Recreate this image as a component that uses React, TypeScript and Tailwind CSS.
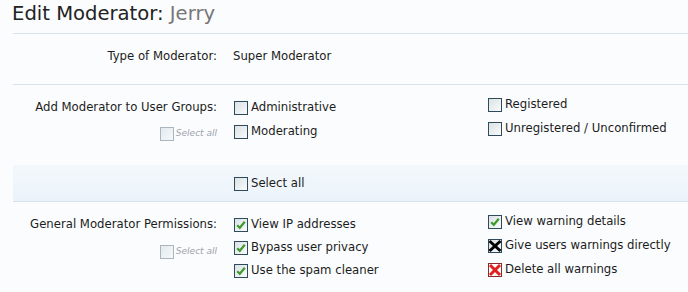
import React from "react";

type Mark = "none" | "check" | "black" | "red";

function Box({ mark = "none", faded = false }: { mark?: Mark; faded?: boolean }) {
  const border = faded ? "#a9b6c0" : "#2d4b5a";
  return (
    <svg width="14" height="14" viewBox="0 0 14 14" className="shrink-0">
      <defs>
        <linearGradient id={faded ? "gf" : "gb"} x1="0" y1="0" x2="1" y2="1">
          <stop offset="0" stopColor={faded ? "#e3e9ee" : "#d9e0e4"} />
          <stop offset="1" stopColor={faded ? "#f7f9fb" : "#fbfcfc"} />
        </linearGradient>
      </defs>
      <rect x="0.5" y="0.5" width="13" height="13" fill={`url(#${faded ? "gf" : "gb"})`} stroke={border} />
      {mark === "check" && (
        <path d="M3.2 7.2 L5.8 9.8 L10.8 3.8" fill="none" stroke="#3f9b2e" strokeWidth="2.2" />
      )}
      {mark === "black" && (
        <g stroke="#000" strokeWidth="3">
          <path d="M1.5 2 L12.5 12" />
          <path d="M12.5 2 L1.5 12" />
        </g>
      )}
      {mark === "red" && (
        <>
          <rect x="0.5" y="0.5" width="13" height="13" fill="#fff" stroke="#8a2a2a" />
          <g stroke="#e02020" strokeWidth="3">
            <path d="M2 2 L12 12" />
            <path d="M12 2 L2 12" />
          </g>
        </>
      )}
    </svg>
  );
}

function Item({ label, mark }: { label: string; mark?: Mark }) {
  return (
    <div className="flex items-center gap-[3px] h-[15px]">
      <Box mark={mark} />
      <span>{label}</span>
    </div>
  );
}

function SmallSelectAll() {
  return (
    <div className="flex items-center justify-end gap-[2px] h-[15px] text-[9px] italic text-[#9aa3aa]">
      <Box faded />
      <span>Select all</span>
    </div>
  );
}

export default function App() {
  return (
    <div
      className="w-[688px] h-[292px] overflow-hidden bg-[#fbfcfe] text-[11.7px] leading-[15px] text-[#1c1c1c]"
      style={{ fontFamily: '"DejaVu Sans", Verdana, sans-serif' }}
    >
      <div className="pl-[13px]">
        {/* heading */}
        <h1 className="h-[33px] pt-[2px] text-[19.6px] leading-[24px] text-[#222] -ml-[1px]">
          Edit Moderator: <span className="text-[#777]">Jerry</span>
        </h1>

        <div className="border-t border-[#d6e3ec]">
          {/* type */}
          <div className="grid grid-cols-[204px_1fr] gap-x-[16px] h-[50px] pt-[15px]">
            <div className="text-right">Type of Moderator:</div>
            <div>Super Moderator</div>
          </div>

          {/* user groups */}
          <div className="border-t border-[#d6e3ec] grid grid-cols-[204px_255px_1fr] gap-x-[16px] h-[81px] pt-[15px]">
            <div className="flex flex-col gap-[11px] text-right">
              <div>Add Moderator to User Groups:</div>
              <SmallSelectAll />
            </div>
            <div className="flex flex-col gap-[9px] -ml-[16px] pl-[17px]">
              <Item label="Administrative" />
              <Item label="Moderating" />
            </div>
            <div className="flex flex-col gap-[9px] -mt-[3px] -ml-[16px]">
              <Item label="Registered" />
              <Item label="Unregistered / Unconfirmed" />
            </div>
          </div>

          {/* select all band */}
          <div className="h-[37px] border-b border-[#d6e3ec] bg-gradient-to-b from-[#f3f8fc] to-[#ebf3fa] pl-[221px] pt-[11px]">
            <Item label="Select all" />
          </div>

          {/* permissions */}
          <div className="grid grid-cols-[204px_255px_1fr] gap-x-[16px] pt-[15px]">
            <div className="flex flex-col gap-[12px] text-right">
              <div>General Moderator Permissions:</div>
              <SmallSelectAll />
            </div>
            <div className="flex flex-col gap-[8px] -ml-[16px] pl-[17px]">
              <Item label="View IP addresses" mark="check" />
              <Item label="Bypass user privacy" mark="check" />
              <Item label="Use the spam cleaner" mark="check" />
            </div>
            <div className="flex flex-col gap-[9px] -mt-[3px] -ml-[16px]">
              <Item label="View warning details" mark="check" />
              <Item label="Give users warnings directly" mark="black" />
              <Item label="Delete all warnings" mark="red" />
            </div>
          </div>
        </div>
      </div>
    </div>
  );
}
